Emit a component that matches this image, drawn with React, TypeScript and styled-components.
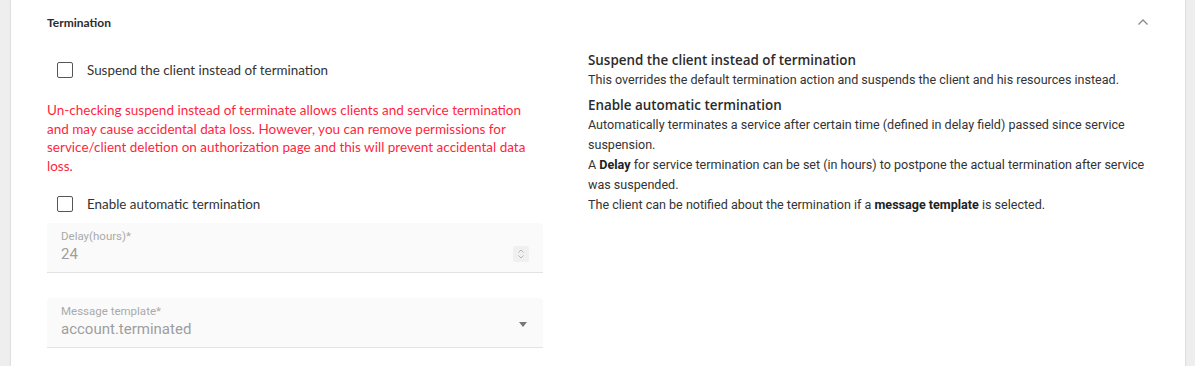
import React from "react";
import styled, { createGlobalStyle } from "styled-components";

const GlobalStyle = createGlobalStyle`
  html, body {
    margin: 0;
    padding: 0;
    background: #eeeeee;
    height: 100%;
  }
  #root {
    height: 100%;
  }
  * { box-sizing: border-box; }
`;

const Page = styled.div`
  height: 366px;
  padding: 0 10px 0 11px;
  overflow: hidden;
`;

const Card = styled.section`
  background: #ffffff;
  height: 100%;
  box-shadow: 0 0 2px rgba(0, 0, 0, 0.18);
  padding: 0 34px 0 36px;
`;

const Header = styled.div`
  height: 44px;
  display: flex;
  align-items: center;
  justify-content: space-between;
`;

const Title = styled.h3`
  margin: 0;
  padding-top: 1px;
  font-family: Lato, "Open Sans", sans-serif;
  font-weight: 700;
  font-size: 12px;
  color: #2b2b2b;
  line-height: 16px;
`;

const Chevron = styled.svg`
  width: 12px;
  height: 8px;
  margin-right: 2px;
`;

const Body = styled.div`
  display: grid;
  grid-template-columns: 496px 1fr;
  column-gap: 45px;
`;

const LeftCol = styled.div`
  display: flex;
  flex-direction: column;
`;

const CheckRow = styled.label<{ $mt: number }>`
  display: flex;
  align-items: center;
  height: 20px;
  margin-top: ${(p) => p.$mt}px;
  padding-left: 10px;
  cursor: pointer;
`;

const Box = styled.span`
  width: 16px;
  height: 16px;
  border: 1.5px solid #555;
  border-radius: 2px;
  margin-right: 14px;
  flex: none;
`;

const CheckLabel = styled.span`
  font-family: Lato, "Open Sans", sans-serif;
  font-size: 13.4px;
  color: #333;
`;

const Warning = styled.p`
  margin: 21px 0 0;
  font-family: Lato, "Open Sans", sans-serif;
  font-size: 13.5px;
  line-height: 18.5px;
  color: #ff1f3e;
`;

const Field = styled.div<{ $mt: number }>`
  margin-top: ${(p) => p.$mt}px;
  height: 50px;
  background: #fafafa;
  border-bottom: 1px solid #e3e3e3;
  border-radius: 4px 4px 0 0;
  padding: 7px 14px 0;
  display: flex;
  align-items: flex-start;
  justify-content: space-between;
`;

const FieldText = styled.div`
  display: flex;
  flex-direction: column;
`;

const FieldLabel = styled.span`
  font-family: Roboto, sans-serif;
  font-size: 11.5px;
  line-height: 12px;
  color: #aaaaaa;
`;

const FieldValue = styled.span`
  margin-top: 3px;
  font-family: Roboto, sans-serif;
  font-size: 15px;
  line-height: 18px;
  color: #9e9e9e;
`;

const Spinner = styled.span`
  margin-top: 16px;
  width: 16px;
  height: 16px;
  background: #f0f0f0;
  border-radius: 2px;
  display: flex;
  align-items: center;
  justify-content: center;
`;

const Caret = styled.span`
  margin-top: 17px;
  margin-right: 2px;
  width: 0;
  height: 0;
  border-left: 4px solid transparent;
  border-right: 4px solid transparent;
  border-top: 5px solid #777;
`;

const RightCol = styled.div`
  padding-top: 8px;
  display: flex;
  flex-direction: column;
`;

const HelpTitle = styled.h4<{ $mt?: number }>`
  margin: ${(p) => p.$mt ?? 0}px 0 0;
  font-family: "Open Sans", Lato, sans-serif;
  font-weight: 600;
  font-size: 13.4px;
  line-height: 17px;
  color: #2b2b2b;
`;

const HelpText = styled.p`
  margin: 1px 0 0;
  font-family: Roboto, sans-serif;
  font-size: 12.55px;
  line-height: 20px;
  color: #333;
  b { font-weight: 700; color: #222; }
`;

export default function App() {
  return (
    <>
      <GlobalStyle />
      <Page>
        <Card>
          <Header>
            <Title>Termination</Title>
            <Chevron viewBox="0 0 12 8">
              <polyline points="1.5,6.5 6,2 10.5,6.5" fill="none" stroke="#8a8a8a" strokeWidth="1.3" />
            </Chevron>
          </Header>
          <Body>
            <LeftCol>
              <CheckRow $mt={16}>
                <Box />
                <CheckLabel>Suspend the client instead of termination</CheckLabel>
              </CheckRow>
              <Warning>
                Un-checking suspend instead of terminate allows clients and service termination and may cause
                accidental data loss. However, you can remove permissions for service/client deletion on
                authorization page and this will prevent accidental data loss.
              </Warning>
              <CheckRow $mt={19}>
                <Box />
                <CheckLabel>Enable automatic termination</CheckLabel>
              </CheckRow>
              <Field $mt={9}>
                <FieldText>
                  <FieldLabel>Delay(hours)*</FieldLabel>
                  <FieldValue>24</FieldValue>
                </FieldText>
                <Spinner>
                  <svg width="8" height="12" viewBox="0 0 8 12">
                    <polyline points="1.5,4.5 4,2 6.5,4.5" fill="none" stroke="#b5b5b5" strokeWidth="1" />
                    <polyline points="1.5,7.5 4,10 6.5,7.5" fill="none" stroke="#b5b5b5" strokeWidth="1" />
                  </svg>
                </Spinner>
              </Field>
              <Field $mt={25}>
                <FieldText>
                  <FieldLabel>Message template*</FieldLabel>
                  <FieldValue>account.terminated</FieldValue>
                </FieldText>
                <Caret />
              </Field>
            </LeftCol>
            <RightCol>
              <HelpTitle>Suspend the client instead of termination</HelpTitle>
              <HelpText>
                This overrides the default termination action and suspends the client and his resources instead.
              </HelpText>
              <HelpTitle $mt={7}>Enable automatic termination</HelpTitle>
              <HelpText>
                Automatically terminates a service after certain time (defined in delay field) passed since service
                suspension.
                <br />A <b>Delay</b> for service termination can be set (in hours) to postpone the actual termination
                after service was suspended.
                <br />
                The client can be notified about the termination if a <b>message template</b> is selected.
              </HelpText>
            </RightCol>
          </Body>
        </Card>
      </Page>
    </>
  );
}
